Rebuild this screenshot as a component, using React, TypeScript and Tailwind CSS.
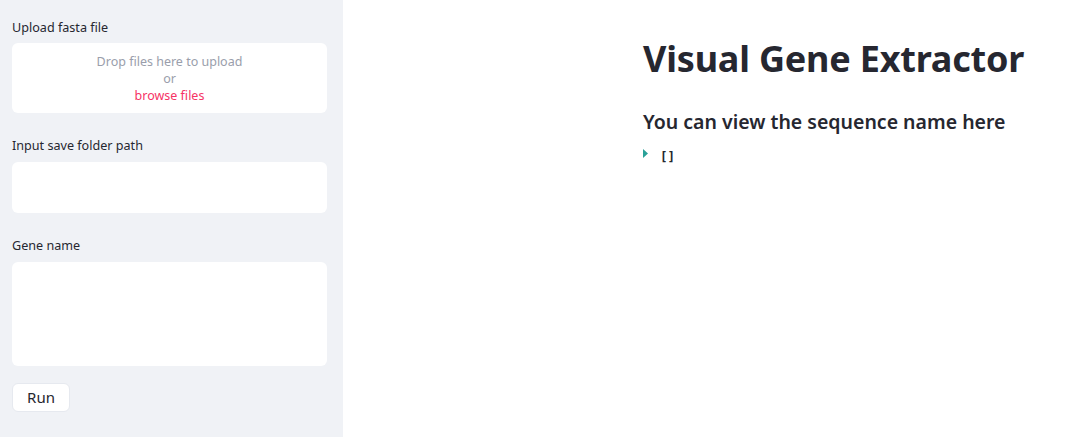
export default function App() {
  return (
    <div className="flex h-[437px] w-[1080px] overflow-hidden bg-white font-['Noto_Sans',sans-serif] text-[#262730]">
      <aside className="flex w-[343px] shrink-0 flex-col bg-[#f0f2f6] pl-3 pr-4 pt-[19px]">
        <label className="text-[12.6px] leading-[18px]">Upload fasta file</label>
        <div className="mt-[6px] flex h-[70px] flex-col items-center justify-center rounded-md bg-white text-[12.5px] leading-[17px]">
          <span className="text-[#9a9eab]">Drop files here to upload</span>
          <span className="text-[#9a9eab]">or</span>
          <span className="text-[#f63366]">browse files</span>
        </div>

        <label className="mt-[24px] text-[12.6px] leading-[18px]">Input save folder path</label>
        <div className="mt-[7px] h-[51px] rounded-md bg-white" />

        <label className="mt-[24px] text-[12.6px] leading-[18px]">Gene name</label>
        <div className="mt-[7px] h-[104px] rounded-md bg-white" />

        <button className="mt-[17px] h-[29px] w-[58px] rounded-md border border-[#e6e9ef] bg-white text-[15px] text-[#262730]">
          Run
        </button>
      </aside>

      <main className="flex-1 pl-[300px] pt-[37px]">
        <h1 className="text-[36px] font-bold leading-[44px] tracking-[-0.2px]">Visual Gene Extractor</h1>
        <h3 className="mt-[27px] text-[19.5px] font-semibold leading-[28px]">You can view the sequence name here</h3>
        <div className="mt-[12px] flex items-center gap-[12px]">
          <svg width="5" height="9" viewBox="0 0 5 9" className="-mt-[7px]">
            <path d="M0 0 L5 4.5 L0 9 Z" fill="#2aa198" />
          </svg>
          <span className="font-['DejaVu_Sans_Mono',monospace] text-[12.5px] font-bold text-[#262730]">[]</span>
        </div>
      </main>
    </div>
  );
}
